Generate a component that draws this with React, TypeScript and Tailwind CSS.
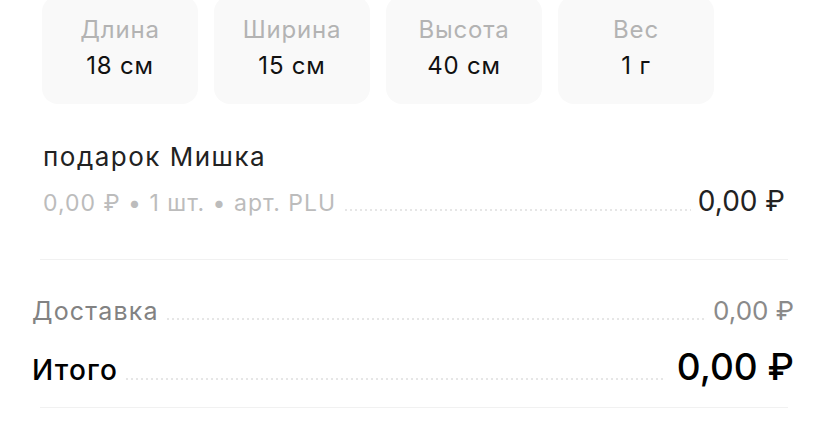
import React from 'react';

interface Dimension {
  label: string;
  value: string;
}

const dims: Dimension[] = [
  { label: 'Длина', value: '18 см' },
  { label: 'Ширина', value: '15 см' },
  { label: 'Высота', value: '40 см' },
  { label: 'Вес', value: '1 г' },
];

// пунктир между названием и суммой
function Leader({ className = '' }: { className?: string }) {
  return (
    <div
      className={`flex-1 h-[2px] bg-[linear-gradient(to_right,#e6e6e6_2px,transparent_2px)] bg-[length:5px_2px] bg-repeat-x ${className}`}
    />
  );
}

export default function App() {
  return (
    <div className="w-[828px] h-[431px] overflow-hidden bg-white font-['Inter','Liberation_Sans',sans-serif] antialiased">
      {/* габариты */}
      <div className="flex gap-4 pl-[42px] -mt-[4px]">
        {dims.map((d) => (
          <div
            key={d.label}
            className="w-[156px] h-[108px] rounded-2xl bg-[#f9f9f9] flex flex-col items-center pt-[20px]"
          >
            <span className="text-[24px] leading-[28px] tracking-[0.8px] text-[#b3b3b3]">{d.label}</span>
            <span className="mt-2 text-[24px] leading-[28px] tracking-[0.8px] text-[#111]">{d.value}</span>
          </div>
        ))}
      </div>

      {/* товар */}
      <div className="pl-[43px] pr-[43px] mt-[38px]">
        <div className="text-[26px] leading-[30px] tracking-[1.5px] text-[#222]">подарок Мишка</div>
        <div className="flex items-baseline mt-[14px]">
          <span className="text-[23px] leading-[30px] tracking-[1px] text-[#bcbcbc]">0,00 ₽ • 1 шт. • арт. PLU</span>
          <Leader className="ml-[9px] mr-[7px]" />
          <span className="text-[28px] leading-[30px] text-[#222]">0,00 ₽</span>
        </div>
      </div>
      <div className="ml-[40px] mr-[40px] mt-[41px] h-px bg-[#f1f1f1]" />

      {/* итог */}
      <div className="pl-[32px] pr-[34px]">
        <div className="flex items-baseline mt-[36px]">
          <span className="text-[25px] leading-[30px] tracking-[1.2px] text-[#828282]">Доставка</span>
          <Leader className="ml-[8px] mr-[9px]" />
          <span className="text-[26px] leading-[30px] text-[#8a8a8a]">0,00 ₽</span>
        </div>
        <div className="flex items-baseline mt-[19px]">
          <span className="text-[28px] leading-[44px] tracking-[1.2px] font-medium text-black">Итого</span>
          <Leader className="ml-[8px] mr-[11px]" />
          <span className="text-[37px] leading-[44px] font-medium text-black">0,00 ₽</span>
        </div>
      </div>
      <div className="ml-[40px] mr-[40px] mt-[15px] h-px bg-[#f1f1f1]" />
    </div>
  );
}
